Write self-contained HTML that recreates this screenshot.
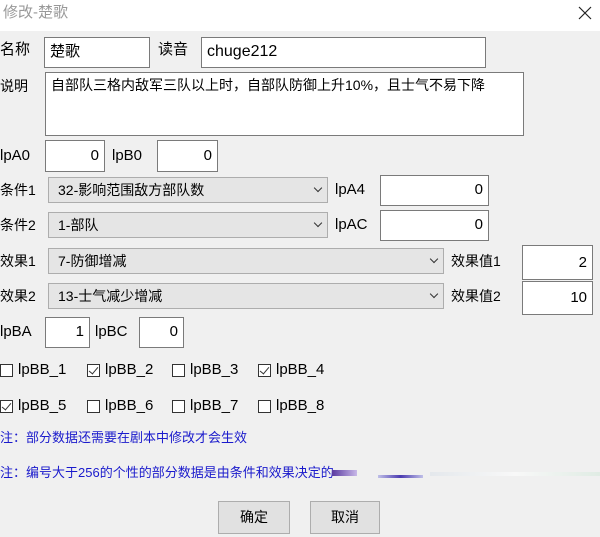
<html><head><style>
body{margin:0;width:600px;height:537px;background:#f0f0f0;font-family:"Liberation Sans","Noto Sans CJK SC",sans-serif;font-size:14px;color:#000;position:relative;overflow:hidden}
.a{position:absolute}
.t{position:absolute;line-height:18px;white-space:nowrap}
.i{position:absolute;background:#fff;border:1px solid #7a7a7a;box-sizing:border-box;padding:0 5px;line-height:28px;font-size:15px}
.r{text-align:right}
.s{position:absolute;background:#e5e5e5;border:1px solid #adadad;box-sizing:border-box;padding-left:9px;line-height:24px}
.s:after{content:"";position:absolute;right:6px;top:7px;width:5px;height:5px;border-right:1px solid #333;border-bottom:1px solid #333;transform:rotate(45deg)}
.cb{position:absolute;width:13px;height:13px;border:1px solid #333;background:#fff;box-sizing:border-box}
.cb.c:after{content:"";position:absolute;left:3px;top:0px;width:4px;height:8px;border-right:1px solid #333;border-bottom:1px solid #333;transform:rotate(40deg)}
.b{position:absolute;background:#e1e1e1;border:1px solid #adadad;box-sizing:border-box;text-align:center;line-height:30px}
.n{color:#1a1acc}
</style></head><body>
<div class="a" style="left:0;top:0;width:600px;height:31px;background:#fff"></div>
<div class="t" style="left:3px;top:4px;color:#999;font-size:15px">修改-楚歌</div>
<svg class="a" style="left:578px;top:6px" width="14" height="14"><path d="M1 1L13 13M13 1L1 13" stroke="#222" stroke-width="1.2"/></svg>

<div class="t" style="left:0;top:41px;font-size:15px">名称</div>
<div class="i" style="left:44px;top:37px;width:106px;height:31px">楚歌</div>
<div class="t" style="left:158px;top:41px;font-size:15px">读音</div>
<div class="i" style="left:201px;top:37px;width:285px;height:31px;font-size:16px">chuge212</div>
<div class="t" style="left:0;top:77px">说明</div>
<div class="i" style="left:45px;top:72px;width:479px;height:64px;line-height:24px;font-size:14px">自部队三格内敌军三队以上时，自部队防御上升10%，且士气不易下降</div>

<div class="t" style="left:0;top:147px;font-size:15px">lpA0</div>
<div class="i r" style="left:45px;top:140px;width:60px;height:32px;line-height:30px">0</div>
<div class="t" style="left:112px;top:147px;font-size:15px">lpB0</div>
<div class="i r" style="left:157px;top:140px;width:61px;height:32px;line-height:30px">0</div>

<div class="t" style="left:0;top:181px">条件1</div>
<div class="s" style="left:48px;top:177px;width:280px;height:26px">32-影响范围敌方部队数</div>
<div class="t" style="left:335px;top:181px;font-size:15px">lpA4</div>
<div class="i r" style="left:380px;top:175px;width:109px;height:31px">0</div>
<div class="t" style="left:0;top:216px">条件2</div>
<div class="s" style="left:48px;top:212px;width:280px;height:26px">1-部队</div>
<div class="t" style="left:335px;top:216px;font-size:15px">lpAC</div>
<div class="i r" style="left:380px;top:210px;width:109px;height:31px">0</div>

<div class="t" style="left:0;top:252px">效果1</div>
<div class="s" style="left:48px;top:248px;width:396px;height:26px">7-防御增减</div>
<div class="t" style="left:451px;top:252px">效果值1</div>
<div class="i r" style="left:522px;top:245px;width:71px;height:35px;line-height:33px">2</div>
<div class="t" style="left:0;top:287px">效果2</div>
<div class="s" style="left:48px;top:283px;width:396px;height:26px">13-士气减少增减</div>
<div class="t" style="left:451px;top:287px">效果值2</div>
<div class="i r" style="left:522px;top:281px;width:71px;height:34px;line-height:32px">10</div>

<div class="t" style="left:0;top:323px;font-size:15px">lpBA</div>
<div class="i r" style="left:45px;top:317px;width:45px;height:31px">1</div>
<div class="t" style="left:95px;top:323px;font-size:15px">lpBC</div>
<div class="i r" style="left:139px;top:317px;width:45px;height:31px">0</div>

<div class="cb" style="left:0;top:364px"></div><div class="t" style="left:18px;top:361px;font-size:15px">lpBB_1</div>
<div class="cb c" style="left:87px;top:364px"></div><div class="t" style="left:105px;top:361px;font-size:15px">lpBB_2</div>
<div class="cb" style="left:172px;top:364px"></div><div class="t" style="left:190px;top:361px;font-size:15px">lpBB_3</div>
<div class="cb c" style="left:258px;top:364px"></div><div class="t" style="left:276px;top:361px;font-size:15px">lpBB_4</div>
<div class="cb c" style="left:0;top:400px"></div><div class="t" style="left:18px;top:397px;font-size:15px">lpBB_5</div>
<div class="cb" style="left:87px;top:400px"></div><div class="t" style="left:105px;top:397px;font-size:15px">lpBB_6</div>
<div class="cb" style="left:172px;top:400px"></div><div class="t" style="left:190px;top:397px;font-size:15px">lpBB_7</div>
<div class="cb" style="left:258px;top:400px"></div><div class="t" style="left:276px;top:397px;font-size:15px">lpBB_8</div>

<div class="t n" style="left:0;top:429px;font-size:13px">注：部分数据还需要在剧本中修改才会生效</div>
<div class="t n" style="left:0;top:464px;font-size:13px">注：编号大于256的个性的部分数据是由条件和效果决定的</div>
<div class="a" style="left:332px;top:470px;width:25px;height:6px;background:linear-gradient(90deg,#5a3aa0,#c8b8e8)"></div>
<div class="a" style="left:378px;top:475px;width:45px;height:3px;background:linear-gradient(90deg,#c0c0e8,#4a3ab0,#c0c0e8)"></div>
<div class="a" style="left:430px;top:472px;width:170px;height:4px;background:linear-gradient(90deg,#e4e8ec,#f8f8f8,#e0ece4)"></div>

<div class="b" style="left:218px;top:501px;width:72px;height:33px">确定</div>
<div class="b" style="left:310px;top:501px;width:70px;height:33px">取消</div>
</body></html>
